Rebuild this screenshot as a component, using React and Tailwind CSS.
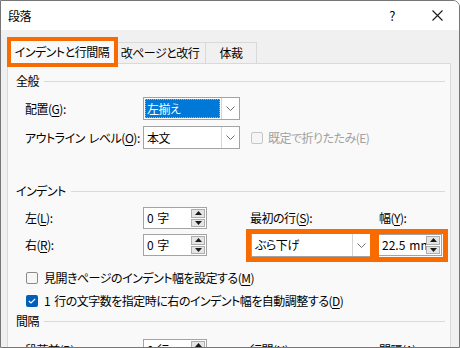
import React from 'react';

const font = { fontFamily: '"Noto Sans CJK JP", "Noto Sans", sans-serif' };

const Key = ({ children }) => <span className="underline underline-offset-2">{children}</span>;

const Sp = () => <span className="inline-block w-[4px]" />;

const Section = ({ label }) => (
  <div className="flex h-[20px] items-center pr-[5px]">
    <span>{label}</span>
    <div className="ml-[5px] h-px flex-1 bg-[#dadada]" />
  </div>
);

const Chevron = () => (
  <svg width="9" height="5" viewBox="0 0 9 5">
    <path d="M0.5 0.5 L4.5 4.5 L8.5 0.5" fill="none" stroke="#707070" strokeWidth="1" />
  </svg>
);

const Select = ({ text, selected, w, h = 'h-[23px]' }) => (
  <div className={`flex shrink-0 ${w} ${h} border border-[#a3a3a3] bg-white`}>
    <div className="flex flex-1 items-center px-[1px] py-[1px]">
      {selected ? (
        <div className="flex h-full w-full items-center border border-dotted border-[#f0a050] bg-[#0078d7] px-[1px] text-white">
          {text}
        </div>
      ) : (
        <span className="px-[2px]">{text}</span>
      )}
    </div>
    <div className="flex w-[18px] items-center justify-center border-l border-[#d4d4d4]">
      <Chevron />
    </div>
  </div>
);

const Arrow = ({ up }) => (
  <svg width="7" height="4" viewBox="0 0 7 4">
    <path d={up ? 'M0 4 L3.5 0 L7 4 Z' : 'M0 0 L3.5 4 L7 0 Z'} fill="#1a1a1a" />
  </svg>
);

const Spin = ({ children, w }) => (
  <div className={`flex shrink-0 ${w} h-[22px] border border-[#a3a3a3] bg-white`}>
    <div className="flex flex-1 items-center overflow-hidden whitespace-pre pl-[3px]">{children}</div>
    <div className="flex w-[15px] shrink-0 flex-col gap-px py-[1px] pr-[1px]">
      <div className="flex flex-1 items-center justify-center border border-[#adadad] bg-[#e5e5e5]">
        <Arrow up />
      </div>
      <div className="flex flex-1 items-center justify-center border border-[#adadad] bg-[#e5e5e5]">
        <Arrow />
      </div>
    </div>
  </div>
);

const Check = ({ checked, disabled }) =>
  checked ? (
    <div className="flex h-[12px] w-[12px] shrink-0 items-center justify-center rounded-[2px] bg-[#005fb8]">
      <svg width="8" height="6" viewBox="0 0 8 6">
        <path d="M0.8 3 L3 5 L7.2 0.8" fill="none" stroke="#fff" strokeWidth="1.2" />
      </svg>
    </div>
  ) : (
    <div
      className={`h-[12px] w-[12px] shrink-0 rounded-[2px] border ${
        disabled ? 'border-[#c6c6c6] bg-[#f5f5f5]' : 'border-[#8a8a8a] bg-[#f7f7f7]'
      }`}
    />
  );

const Label = ({ w, className = '', children }) => (
  <span className={`shrink-0 whitespace-pre ${w} ${className}`}>{children}</span>
);

export default function App() {
  return (
    <div
      className="relative h-[348px] w-[460px] overflow-hidden bg-white text-[12px] leading-none tracking-[-0.5px] text-black [font-feature-settings:'palt']"
      style={font}
    >
      <div className="flex h-[348px] w-[460px] flex-col overflow-hidden rounded-tr-[7px] border border-[#767676]">
        {/* Title bar */}
        <div className="flex h-[29px] shrink-0 items-center bg-white pl-[7px]">
          <span>段落</span>
          <span className="ml-auto mr-[37px] text-[13px]">?</span>
          <svg className="mr-[16px]" width="11" height="11" viewBox="0 0 11 11">
            <path d="M0.5 0.5 L10.5 10.5 M10.5 0.5 L0.5 10.5" stroke="#1a1a1a" strokeWidth="1.1" />
          </svg>
        </div>

        <div className="flex flex-1 flex-col bg-[#f0f0f0] pl-[6px] pr-[8px]">
          {/* Tabs */}
          <div className="flex h-[33px] items-end pl-[2px]">
            <div className="flex h-[24px] w-[106px] items-center justify-center whitespace-nowrap border-l border-r border-t border-[#d9d9d9] bg-[#f9f9f9]">
              インデントと行間隔
            </div>
            <div className="flex h-[21px] w-[91px] items-center justify-center whitespace-nowrap border-r border-t border-[#d9d9d9]">
              改ページと改行
            </div>
            <div className="flex h-[21px] w-[51px] items-center justify-center border-r border-t border-[#d9d9d9]">
              体裁
            </div>
          </div>

          {/* Panel */}
          <div className="flex flex-1 flex-col border border-[#d9d9d9] bg-[#f9f9f9] pl-[8px]">
            <div className="mt-[7px]">
              <Section label="全般" />
            </div>
            <div className="pl-[9px]">
              <div className="mt-[6px] flex h-[23px] items-center">
                <Label w="w-[118px]">
                  配置(<Key>G</Key>):
                </Label>
                <Select text="左揃え" selected w="w-[97px]" />
              </div>
              <div className="mt-[6px] flex h-[23px] items-center">
                <Label w="w-[118px]">
                  アウトライン<Sp />レベル(<Key>O</Key>):
                </Label>
                <Select text="本文" w="w-[97px]" />
                <div className="ml-[11px] flex items-center gap-[5px] whitespace-nowrap text-[#a0a0a0]">
                  <Check disabled />
                  <span>既定で折りたたみ(E)</span>
                </div>
              </div>
            </div>

            <div className="mt-[32px]">
              <Section label="インデント" />
            </div>
            <div className="pl-[9px]">
              <div className="mt-[6px] flex h-[22px] items-center">
                <Label w="w-[118px]">
                  左(<Key>L</Key>):
                </Label>
                <Spin w="w-[64px]">
                  0<Sp />字
                </Spin>
                <Label w="w-[129px]" className="ml-[43px]">
                  最初の行(<Key>S</Key>):
                </Label>
                <Label w="w-[50px]">
                  幅(<Key>Y</Key>):
                </Label>
              </div>
              <div className="mt-[4px] flex h-[24px] items-center">
                <Label w="w-[118px]">
                  右(<Key>R</Key>):
                </Label>
                <Spin w="w-[64px]">
                  0<Sp />字
                </Spin>
                <div className="ml-[44px]">
                  <Select text="ぶら下げ" w="w-[120px]" h="h-[24px]" />
                </div>
                <div className="ml-[7px]">
                  <Spin w="w-[64px]">
                    <span className="tracking-normal">
                      22.5<Sp />mm
                    </span>
                  </Spin>
                </div>
              </div>
              <div className="mt-[13px] flex h-[16px] items-center gap-[6px] whitespace-pre pl-[1px]">
                <Check />
                <span>
                  見開きページのインデント幅を設定する(<Key>M</Key>)
                </span>
              </div>
              <div className="mt-[7px] flex h-[16px] items-center gap-[6px] whitespace-pre pl-[1px]">
                <Check checked />
                <span>
                  1<Sp />行の文字数を指定時に右のインデント幅を自動調整する(<Key>D</Key>)
                </span>
              </div>
            </div>

            <div className="mt-[2px]">
              <Section label="間隔" />
            </div>
            <div className="pl-[9px]">
              <div className="mt-[8px] flex h-[22px] items-center">
                <Label w="w-[118px]">
                  段落前(<Key>B</Key>):
                </Label>
                <Spin w="w-[64px]">
                  0<Sp />行
                </Spin>
                <Label w="w-[129px]" className="ml-[43px]">
                  行間(<Key>N</Key>):
                </Label>
                <Label w="w-[50px]">
                  間隔(<Key>A</Key>):
                </Label>
              </div>
            </div>
          </div>
        </div>
      </div>

      {/* Orange annotation boxes */}
      <div className="absolute left-[7px] top-[37px] h-[30px] w-[111px] border-[4px] border-[#f76b00]" />
      <div className="absolute left-[246px] top-[229px] h-[33px] w-[129px] border-[5px] border-[#f76b00]" />
      <div className="absolute left-[374px] top-[229px] h-[33px] w-[74px] border-[5px] border-[#f76b00]" />
    </div>
  );
}
